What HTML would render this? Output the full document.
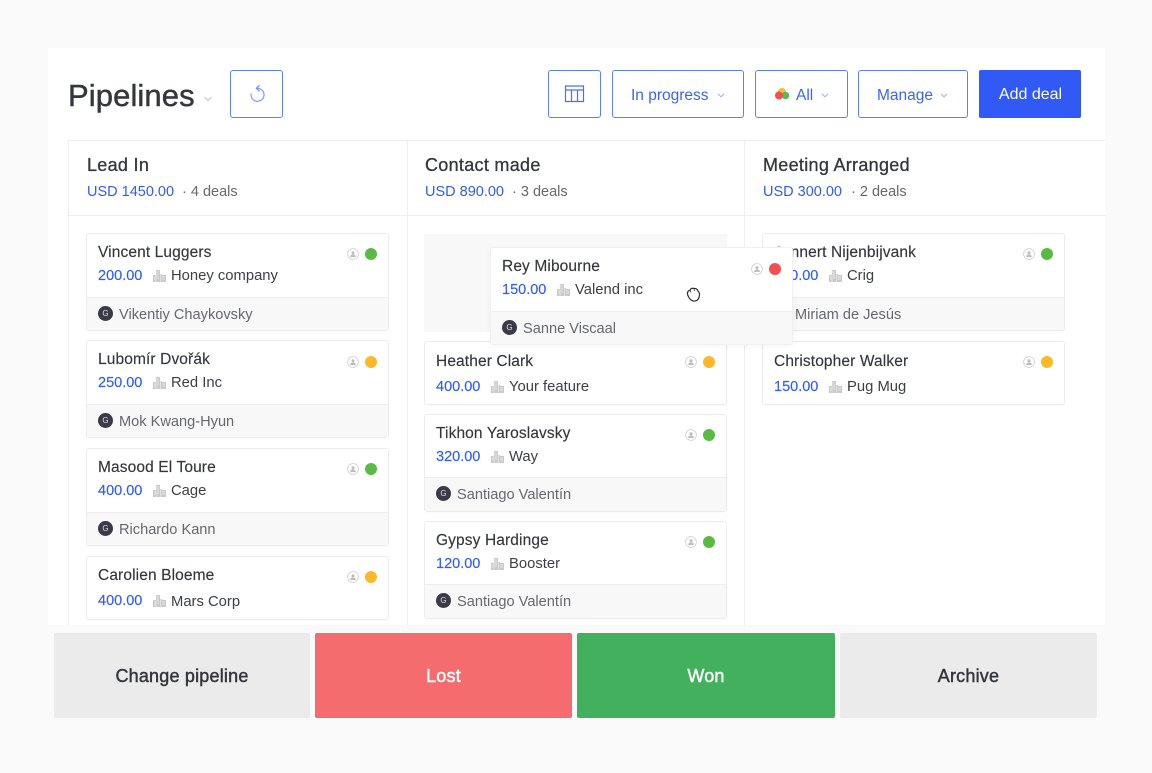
<!DOCTYPE html>
<html><head><meta charset="utf-8"><style>
*{box-sizing:border-box}
html,body{margin:0;padding:0}
body{width:1152px;height:773px;position:relative;overflow:hidden;background:#fafafa;font-family:"Liberation Sans",sans-serif;color:#33363b}
.a,.t{position:absolute}
.t{white-space:nowrap;line-height:20px;font-size:15px}
.b{color:#2f5cf5}
.btn{position:absolute;top:70px;height:48px;border:1.5px solid #5f7ffa;border-radius:3px;background:#fff;color:#3b64f5;font-size:15.5px;line-height:49px}
.card{position:absolute;width:301px;background:#fff;box-shadow:0 0 0 1px #ececed,0 1px 2px rgba(0,0,0,.05);border-radius:2px}
.o{position:absolute;left:0;right:0;top:63px;bottom:0;background:#f8f8f8;border-top:1px solid #eeeeee}
.n{position:absolute;left:11px;top:9px;white-space:nowrap;font-size:15.5px;letter-spacing:.12px;line-height:20px;color:#33363b;-webkit-text-stroke:.15px #33363b}
.v{position:absolute;left:11px;white-space:nowrap;font-size:14.5px;line-height:20px;color:#2f5cf5;-webkit-text-stroke:.15px #2f5cf5}
.c{position:absolute;left:84px;white-space:nowrap;font-size:14.8px;line-height:20px;color:#3c3f44}
.w{position:absolute;left:32px;white-space:nowrap;font-size:14.6px;line-height:20px;color:#66686c;top:7px}
.g{position:absolute;left:11px;top:8px;width:15px;height:15px;border-radius:50%;background:#3a3b47;color:#ddd;font-size:8px;line-height:15px;text-align:center}
.d{position:absolute;left:278px;width:12px;height:12px;border-radius:50%}
.p{position:absolute;left:260px;width:12px;height:12px}
.i{position:absolute;left:66px;width:13px;height:13px}
.big{position:absolute;top:633px;height:85px;border-radius:2px;text-align:center;line-height:87px;font-size:18px;letter-spacing:.2px}
.hd{font-size:18px;letter-spacing:.3px;top:155px;color:#33363b;-webkit-text-stroke:.3px #33363b}
.sub{top:182px;font-size:14.5px}
</style></head><body>
<svg width="0" height="0" style="position:absolute"><defs>
<symbol id="u" viewBox="0 0 12 12"><circle cx="6" cy="6" r="5.4" fill="#fff" stroke="#d2d2d2" stroke-width=".9"/><circle cx="6" cy="4.7" r="1.5" fill="#bdbdbd"/><path d="M3.2 9h5.6c0-1.8-1.2-2.6-2.8-2.6S3.200 7.200 3.200 9z" fill="#bdbdbd"/></symbol>
<symbol id="h" viewBox="0 0 13 13"><path d="M0 13V6h3V1h4v4h2V6h4v7z" fill="#c8cacc"/><path d="M4 3h2M4 5h2M4 7h2M4 9h2M1 8h1.500M1 10h1.500M9 8h3M9 10h3M3 0v13M7.500 5v8" stroke="#eee" stroke-width=".7" fill="none"/></symbol>
</defs></svg>

<div class="a" style="left:48px;top:48px;width:1057px;height:577px;background:#fff"></div>
<div class="t" style="left:68px;top:76px;font-size:31px;letter-spacing:.1px;line-height:40px;color:#33363b;-webkit-text-stroke:.45px #33363b">Pipelines</div>
<svg class="a" style="left:203px;top:96px" width="10" height="6"><path d="M1.500 1.200 5 4.500 8.500 1.200" fill="none" stroke="#c9cacc" stroke-width="1.300"/></svg>

<div class="btn" style="left:230px;width:53px"><svg class="a" style="left:16px;top:12px" width="20" height="21" viewBox="0 0 20 21"><path d="M10.500 5.300a6.500 6.500 0 1 1-6.300 5" fill="none" stroke="#7f98fa" stroke-width="1.200"/><path d="M12.500 2.300 9.400 5.300 12.500 8.300" fill="none" stroke="#6e8bf9" stroke-width="1.200"/></svg></div>
<div class="btn" style="left:548px;width:53px"><svg class="a" style="left:15px;top:13px" width="21" height="20" viewBox="0 0 21 20"><path d="M1.500 2h18v15.500h-18zM1.500 6h18M7.500 6v11.500M13.500 6v11.500" fill="none" stroke="#4a6ff6" stroke-width="1.200"/></svg></div>
<div class="btn" style="left:612px;width:132px;padding-left:18px">In progress<svg class="a" style="left:104px;top:22px" width="8" height="5"><path d="M1 1 4 3.800 7 1" fill="none" stroke="#9fb2f8" stroke-width="1.100"/></svg></div>
<div class="btn" style="left:755px;width:93px;padding-left:40px">All<svg class="a" style="left:65px;top:22px" width="8" height="5"><path d="M1 1 4 3.800 7 1" fill="none" stroke="#9fb2f8" stroke-width="1.100"/></svg><svg class="a" style="left:18px;top:16px" width="16" height="14"><circle cx="8" cy="5" r="4" fill="#f6bd36"/><circle cx="11.500" cy="8.500" r="3.800" fill="#5cb85c"/><circle cx="5" cy="8.500" r="4" fill="#ef5350"/></svg></div>
<div class="btn" style="left:858px;width:110px;padding-left:18px">Manage<svg class="a" style="left:81px;top:22px" width="8" height="5"><path d="M1 1 4 3.800 7 1" fill="none" stroke="#9fb2f8" stroke-width="1.100"/></svg></div>
<div class="a" style="left:979px;top:70px;width:102px;height:48px;background:#3059f5;border-radius:2px;color:#fff;font-size:16px;line-height:50px;text-align:center;padding-left:1px">Add deal</div>

<div class="a" style="left:68px;top:140px;width:1037px;height:1px;background:#eeeeef"></div>
<div class="a" style="left:68px;top:215px;width:1037px;height:1px;background:#eeeeef"></div>
<div class="a" style="left:68px;top:140px;width:1px;height:485px;background:#eeeeef"></div>
<div class="a" style="left:407px;top:140px;width:1px;height:485px;background:#eeeeef"></div>
<div class="a" style="left:744px;top:140px;width:1px;height:485px;background:#eeeeef"></div>

<div class="t hd" style="left:87px">Lead In</div>
<div class="t b sub" style="left:87px">USD 1450.00</div>
<div class="t sub" style="left:182px;color:#66686c">· 4 deals</div>
<div class="t hd" style="left:425px">Contact made</div>
<div class="t b sub" style="left:425px">USD 890.00</div>
<div class="t sub" style="left:512px;color:#66686c">· 3 deals</div>
<div class="t hd" style="left:763px">Meeting Arranged</div>
<div class="t b sub" style="left:763px">USD 300.00</div>
<div class="t sub" style="left:851px;color:#66686c">· 2 deals</div>

<!-- Column 1 -->
<div class="card" style="left:87px;top:234px;height:96px"><div class="n">Vincent Luggers</div><div class="v" style="top:32px">200.00</div><svg class="i" style="top:35px"><use href="#h"/></svg><div class="c" style="top:32px">Honey company</div><svg class="p" style="top:14px"><use href="#u"/></svg><div class="d" style="top:14px;background:#5abb43"></div><div class="o"><div class="g">G</div><div class="w">Vikentiy Chaykovsky</div></div></div>
<div class="card" style="left:87px;top:341px;height:96px"><div class="n">Lubomír Dvořák</div><div class="v" style="top:32px">250.00</div><svg class="i" style="top:35px"><use href="#h"/></svg><div class="c" style="top:32px">Red Inc</div><svg class="p" style="top:15px"><use href="#u"/></svg><div class="d" style="top:15px;background:#fbb928"></div><div class="o"><div class="g">G</div><div class="w">Mok Kwang-Hyun</div></div></div>
<div class="card" style="left:87px;top:449px;height:96px"><div class="n">Masood El Toure</div><div class="v" style="top:32px">400.00</div><svg class="i" style="top:35px"><use href="#h"/></svg><div class="c" style="top:32px">Cage</div><svg class="p" style="top:14px"><use href="#u"/></svg><div class="d" style="top:14px;background:#5abb43"></div><div class="o"><div class="g">G</div><div class="w">Richardo Kann</div></div></div>
<div class="card" style="left:87px;top:557px;height:62px"><div class="n">Carolien Bloeme</div><div class="v" style="top:34px">400.00</div><svg class="i" style="top:37px"><use href="#h"/></svg><div class="c" style="top:35px">Mars Corp</div><svg class="p" style="top:14px"><use href="#u"/></svg><div class="d" style="top:14px;background:#fbb928"></div></div>

<!-- Column 2 -->
<div class="a" style="left:424px;top:234px;width:303px;height:98px;background:#f8f8f8;border-radius:2px"></div>
<div class="card" style="left:425px;top:342px;height:62px"><div class="n" style="top:10px">Heather Clark</div><div class="v" style="top:35px">400.00</div><svg class="i" style="top:38px"><use href="#h"/></svg><div class="c" style="top:35px">Your feature</div><svg class="p" style="top:14px"><use href="#u"/></svg><div class="d" style="top:14px;background:#fbb928"></div></div>
<div class="card" style="left:425px;top:415px;height:96px"><div class="n">Tikhon Yaroslavsky</div><div class="v" style="top:32px">320.00</div><svg class="i" style="top:35px"><use href="#h"/></svg><div class="c" style="top:32px">Way</div><svg class="p" style="top:14px"><use href="#u"/></svg><div class="d" style="top:14px;background:#5abb43"></div><div class="o" style="top:62px"><div class="g">G</div><div class="w">Santiago Valentín</div></div></div>
<div class="card" style="left:425px;top:522px;height:96px"><div class="n">Gypsy Hardinge</div><div class="v" style="top:32px">120.00</div><svg class="i" style="top:35px"><use href="#h"/></svg><div class="c" style="top:32px">Booster</div><svg class="p" style="top:14px"><use href="#u"/></svg><div class="d" style="top:14px;background:#5abb43"></div><div class="o" style="top:62px"><div class="g">G</div><div class="w">Santiago Valentín</div></div></div>

<!-- Column 3 -->
<div class="card" style="left:763px;top:234px;height:96px"><div class="n">Jennert Nijenbijvank</div><div class="v" style="top:32px">250.00</div><svg class="i" style="top:35px"><use href="#h"/></svg><div class="c" style="top:32px">Crig</div><svg class="p" style="top:14px"><use href="#u"/></svg><div class="d" style="top:14px;background:#5abb43"></div><div class="o"><div class="g">G</div><div class="w">Miriam de Jesús</div></div></div>
<div class="card" style="left:763px;top:342px;height:62px"><div class="n" style="top:10px">Christopher Walker</div><div class="v" style="top:35px">150.00</div><svg class="i" style="top:38px"><use href="#h"/></svg><div class="c" style="top:35px">Pug Mug</div><svg class="p" style="top:14px"><use href="#u"/></svg><div class="d" style="top:14px;background:#fbb928"></div></div>

<!-- Dragged -->
<div class="a" style="left:770px;top:243px;width:23px;height:5px;background:rgba(255,255,255,.75)"></div>
<div class="card" style="left:491px;top:248px;height:96px;box-shadow:0 0 0 1px #f0f0f1,0 2px 8px rgba(0,0,0,.05)"><div class="n">Rey Mibourne</div><div class="v" style="top:32px">150.00</div><svg class="i" style="top:35px"><use href="#h"/></svg><div class="c" style="top:32px">Valend inc</div><svg class="p" style="top:15px"><use href="#u"/></svg><div class="d" style="top:15px;background:#f25050"></div><div class="o"><div class="g">G</div><div class="w">Sanne Viscaal</div></div></div>
<svg class="a" style="left:686px;top:287px" width="15" height="16" viewBox="0 0 15 16"><path d="M1.500 5.500C2 4 3 3.500 4 3.200 4.800 1.300 6.500 1 8 1.500c1.800-.3 3.300.7 3.800 2.300 1.700 1.500 2.200 4.200 1.200 6.500-.6 2.700-3.200 4.200-6 3.600-2.200-.5-3.700-2.600-4.600-4.300-.7-1.200-1.100-2.700-.9-4.100z" fill="#fff" stroke="#2c2c2c" stroke-width="1.200"/><path d="M4 3.200 5 5.500M8 1.500 8.500 4" fill="none" stroke="#2c2c2c" stroke-width=".7"/></svg>

<!-- Bottom -->
<div class="big" style="left:54px;width:256px;background:#ebebeb;color:#33363b;-webkit-text-stroke:.45px #33363b">Change pipeline</div>
<div class="big" style="left:315px;width:257px;background:#f56c6e;color:#fff;-webkit-text-stroke:.45px #fff">Lost</div>
<div class="big" style="left:577px;width:258px;background:#42b05c;color:#fff;-webkit-text-stroke:.45px #fff">Won</div>
<div class="big" style="left:840px;width:257px;background:#ebebeb;color:#33363b;-webkit-text-stroke:.45px #33363b">Archive</div>
</body></html>
